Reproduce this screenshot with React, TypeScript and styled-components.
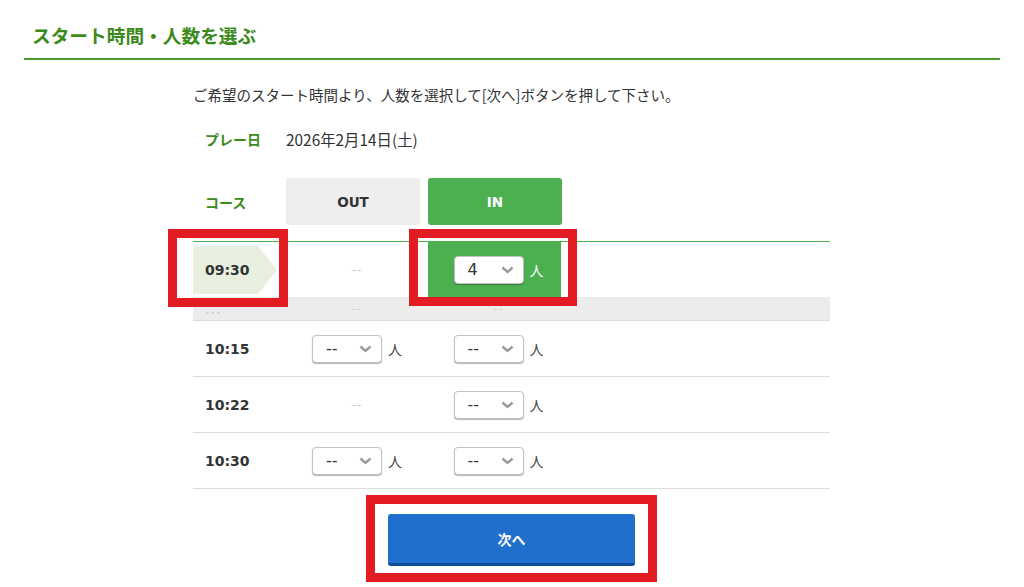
import styled, { createGlobalStyle } from "styled-components";

const GlobalStyle = createGlobalStyle`
  body {
    margin: 0;
    background: #fff;
    font-family: "Noto Sans CJK JP", "DejaVu Sans", sans-serif;
    color: #333;
  }
`;

const GREEN = "#4caf50";
const TEXT_GREEN = "#3c8a1c";

const Page = styled.div`
  position: relative;
  width: 1024px;
  height: 587px;
  overflow: hidden;
  padding: 0 24px;
  box-sizing: border-box;
`;

const TitleBar = styled.div`
  padding: 22px 8px 10px;
  border-bottom: 2px solid #4b9a2c;
`;

const Title = styled.h2`
  margin: 0;
  font-size: 18.7px;
  line-height: 26px;
  font-weight: 700;
  color: ${TEXT_GREEN};
`;

const Content = styled.div`
  margin-left: 169px;
  width: 637px;
`;

const Lead = styled.p`
  margin: 25px 0 0;
  font-size: 14.5px;
  line-height: 20px;
  color: #333;
`;

const Row = styled.div<{ $h: number; $gap: number }>`
  display: grid;
  grid-template-columns: 93px 142px 133px 1fr;
  align-items: center;
  height: ${(p) => p.$h}px;
  margin-top: ${(p) => p.$gap}px;
`;

const Label = styled.div`
  padding-left: 12px;
  font-size: 14px;
  font-weight: 700;
  color: ${TEXT_GREEN};
`;

const DateText = styled.div`
  grid-column: 2 / 5;
  font-size: 15.4px;
  color: #333;
`;

const Tab = styled.div<{ $on?: boolean }>`
  width: 134px;
  height: 47px;
  display: flex;
  align-items: center;
  justify-content: center;
  border-radius: 3px;
  background: ${(p) => (p.$on ? GREEN : "#eeeeee")};
  color: ${(p) => (p.$on ? "#fff" : "#333")};
  font-family: "DejaVu Sans", sans-serif;
  font-size: 13.5px;
  font-weight: 700;
`;

const Table = styled.div`
  margin-top: 16px;
  border-top: 1px solid ${GREEN};
`;

const TimeRow = styled.div`
  display: grid;
  grid-template-columns: 93px 142px 133px 1fr;
  align-items: center;
  height: 55px;
  border-bottom: 1px solid #dcdcdc;
`;

const SelectedRow = styled(TimeRow)`
  height: 55px;
  border-bottom: none;
  align-items: stretch;
`;

const StripRow = styled(TimeRow)`
  height: 23px;
  background: #ececec;
  overflow: hidden;
`;

const Time = styled.div`
  padding-left: 12px;
  font-family: "DejaVu Sans", sans-serif;
  font-size: 14px;
  font-weight: 700;
  color: #333;
`;

const TimeFlag = styled.div`
  align-self: center;
  position: relative;
  width: 65px;
  height: 48px;
  background: #e8efdf;
  display: flex;
  align-items: center;
  padding-left: 12px;
  box-sizing: border-box;
  font-family: "DejaVu Sans", sans-serif;
  font-size: 14px;
  font-weight: 700;
  color: #333;

  &::after {
    content: "";
    position: absolute;
    left: 65px;
    top: 0;
    border-style: solid;
    border-width: 24px 0 24px 19px;
    border-color: transparent transparent transparent #e8efdf;
  }
`;

const Cell = styled.div<{ $on?: boolean; $in?: boolean }>`
  display: flex;
  align-items: center;
  justify-content: center;
  height: 100%;
  box-sizing: border-box;
  padding-left: ${(p) => (p.$in ? 8 : 0)}px;
  background: ${(p) => (p.$on ? GREEN : "transparent")};
`;

const Dash = styled.span<{ $faint?: boolean }>`
  font-family: "DejaVu Sans", sans-serif;
  font-size: 12px;
  letter-spacing: 1px;
  color: ${(p) => (p.$faint ? "#d0d0d0" : "#c4c4c4")};
`;

const SelectWrap = styled.div`
  position: relative;
  width: 70px;
  height: 28px;
`;

const Select = styled.select`
  appearance: none;
  -webkit-appearance: none;
  width: 100%;
  height: 100%;
  box-sizing: border-box;
  border: 1px solid #c2c2c2;
  border-radius: 4px;
  background: #fff;
  box-shadow: 0 1px 1px rgba(0, 0, 0, 0.3);
  padding: 0 0 0 13px;
  font-family: "DejaVu Sans", sans-serif;
  font-size: 16px;
  color: #333;
  outline: none;
`;

const Chevron = styled.svg`
  position: absolute;
  right: 10px;
  top: 10px;
  pointer-events: none;
`;

const Unit = styled.span<{ $light?: boolean }>`
  margin-left: 6px;
  font-size: 14px;
  color: ${(p) => (p.$light ? "#fff" : "#444")};
`;

const Footer = styled.div`
  display: flex;
  justify-content: center;
  padding-top: 25px;
`;

const NextButton = styled.button`
  width: 247px;
  height: 52px;
  border: none;
  border-bottom: 3px solid #0d4c9c;
  border-radius: 3px;
  background: #206fcd;
  color: #fff;
  font-family: "Noto Sans CJK JP", sans-serif;
  font-size: 14px;
  font-weight: 700;
  cursor: pointer;
`;

const Marker = styled.div<{ $x: number; $y: number; $w: number; $h: number }>`
  position: absolute;
  left: ${(p) => p.$x}px;
  top: ${(p) => p.$y}px;
  width: ${(p) => p.$w}px;
  height: ${(p) => p.$h}px;
  box-sizing: border-box;
  border: 9px solid #e31c23;
  pointer-events: none;
`;

type PickerProps = { value: string; light?: boolean; inCol?: boolean };

const Picker = ({ value, light, inCol }: PickerProps) => (
  <Cell $on={light} $in={inCol}>
    <SelectWrap>
      <Select defaultValue={value}>
        <option value="--">--</option>
        {["1", "2", "3", "4"].map((n) => (
          <option key={n} value={n}>
            {n}
          </option>
        ))}
      </Select>
      <Chevron width="13" height="8" viewBox="0 0 13 8">
        <path d="M1.5 1.5 L6.5 6 L11.5 1.5" fill="none" stroke="#9a9a9a" strokeWidth="2.4" />
      </Chevron>
    </SelectWrap>
    <Unit $light={light}>人</Unit>
  </Cell>
);

const Empty = () => (
  <Cell>
    <Dash>--</Dash>
  </Cell>
);

const rows = [
  { time: "10:15", out: true },
  { time: "10:22", out: false },
  { time: "10:30", out: true },
];

export default function App() {
  return (
    <>
      <GlobalStyle />
      <Page>
        <TitleBar>
          <Title>スタート時間・人数を選ぶ</Title>
        </TitleBar>
        <Content>
          <Lead>ご希望のスタート時間より、人数を選択して[次へ]ボタンを押して下さい。</Lead>
          <Row $h={42} $gap={13}>
            <Label>プレー日</Label>
            <DateText>2026年2月14日(土)</DateText>
          </Row>
          <Row $h={47} $gap={18}>
            <Label>コース</Label>
            <Tab>OUT</Tab>
            <Tab $on>IN</Tab>
          </Row>
          <Table>
            <SelectedRow>
              <TimeFlag>09:30</TimeFlag>
              <Empty />
              <Picker value="4" light inCol />
            </SelectedRow>
            <StripRow>
              <Time>
                <Dash $faint>...</Dash>
              </Time>
              <Cell>
                <Dash $faint>--</Dash>
              </Cell>
              <Cell $in>
                <Dash $faint>--</Dash>
              </Cell>
            </StripRow>
            {rows.map((r) => (
              <TimeRow key={r.time}>
                <Time>{r.time}</Time>
                {r.out ? <Picker value="--" /> : <Empty />}
                <Picker value="--" inCol />
              </TimeRow>
            ))}
          </Table>
          <Footer>
            <NextButton>次へ</NextButton>
          </Footer>
        </Content>
        <Marker $x={168} $y={229} $w={120} $h={78} />
        <Marker $x={409} $y={229} $w={168} $h={77} />
        <Marker $x={366} $y={495} $w={291} $h={87} />
      </Page>
    </>
  );
}
